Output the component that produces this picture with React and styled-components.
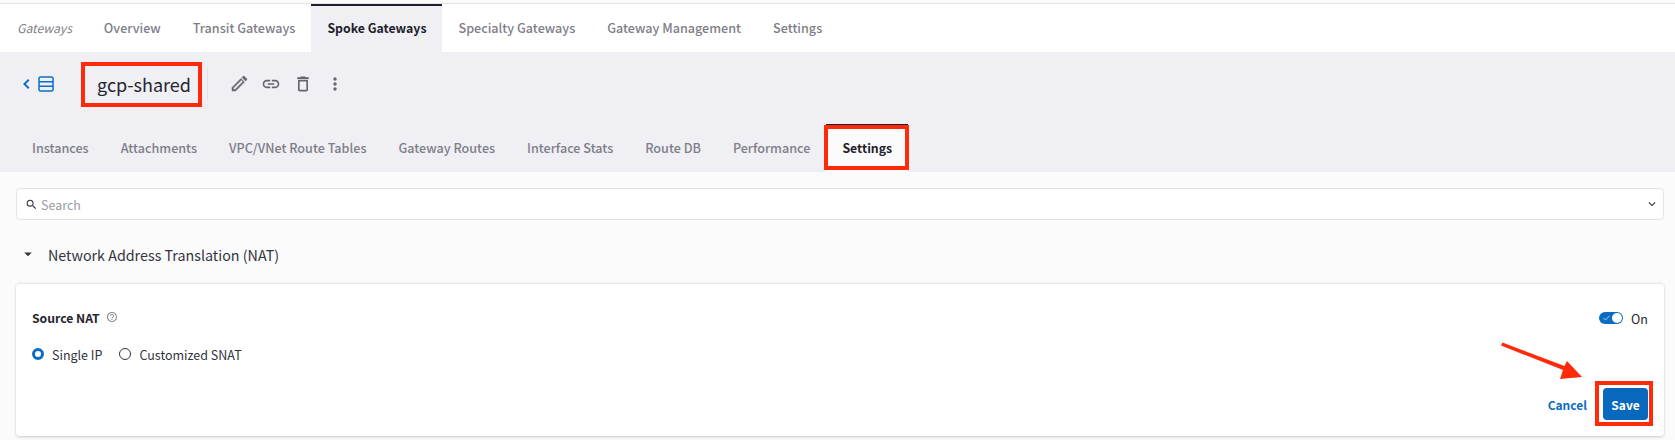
import React from "react";
import styled, { createGlobalStyle } from "styled-components";
import { MdLink, MdMoreVert, MdSearch, MdKeyboardArrowDown, MdArrowDropDown, MdHelpOutline, MdOutlineDelete } from "react-icons/md";

const Global = createGlobalStyle`
  html, body { margin: 0; padding: 0; background: #fbfbfc; }
  body { font-family: "Noto Sans CJK SC", "Noto Sans", sans-serif; }
`;

const Page = styled.div`
  position: relative;
  width: 1675px;
  height: 440px;
  overflow: hidden;
  background: #fbfbfc;
  color: #25252f;
`;

const TopNav = styled.nav`
  display: flex;
  align-items: stretch;
  height: 48px;
  margin-top: 3px;
  padding-left: 1px;
  background: #fff;
  border-top: 1px solid #e3e3e6;
`;

const Tab = styled.div`
  display: flex;
  align-items: center;
  padding: 0 16px 2px;
  font-size: ${(p) => (p.$italic ? "12.2px" : p.$active ? "12.3px" : "12.6px")};
  line-height: 20px;
  white-space: nowrap;
  box-sizing: border-box;
  color: ${(p) => (p.$active ? "#1f1f2b" : "#7e7e88")};
  font-style: ${(p) => (p.$italic ? "italic" : "normal")};
  font-weight: ${(p) => (p.$italic ? 400 : p.$active ? 700 : 500)};
  background: ${(p) => (p.$active ? p.$bg : "transparent")};
  border-top: 2px solid ${(p) => (p.$active ? "#1f1f2b" : "transparent")};
`;

const SubHeader = styled.header`
  height: 120px;
  background: #efeff4;
  display: flex;
  flex-direction: column;
`;

const TitleRow = styled.div`
  display: flex;
  align-items: center;
  height: 72px;
  padding: 0 0 8px 23px;
  box-sizing: border-box;
`;

const BackLink = styled.div`
  display: flex;
  align-items: center;
  gap: 8px;
  width: 74px;
  color: #0b6fc7;
`;

const Title = styled.h1`
  margin: -1px 0 0;
  width: 110px;
  font-size: 18px;
  font-weight: 400;
  line-height: 30px;
  white-space: nowrap;
  color: #25252f;
`;

const Divider = styled.div`
  width: 1px;
  height: 32px;
  background: #e0e0e5;
  margin-right: 21px;
`;

const IconGroup = styled.div`
  display: flex;
  align-items: center;
  gap: 12px;
  color: #66666f;
`;

const IconSlot = styled.span`
  display: flex;
  align-items: center;
  justify-content: center;
  width: 20px;
  height: 20px;
`;

const SubTabs = styled.div`
  display: flex;
  align-items: stretch;
  height: 48px;
  padding-left: 16px;
`;

const Content = styled.main`
  padding: 16px 11px 0 16px;
`;

const SearchBar = styled.div`
  display: flex;
  align-items: center;
  height: 32px;
  box-sizing: border-box;
  padding: 0 4px 0 8px;
  background: #fff;
  border: 1px solid #e3e3e6;
  border-radius: 4px;
  color: #33333d;
`;

const SearchText = styled.span`
  flex: 1;
  margin-left: 3px;
  font-size: 12.5px;
  color: #9a9aa2;
`;

const SectionHead = styled.div`
  display: flex;
  align-items: center;
  height: 63px;
  box-sizing: border-box;
  padding: 5px 0 0 3px;
  font-size: 14.3px;
  color: #33333d;
`;

const SectionTitle = styled.span`
  margin-left: 11px;
`;

const Card = styled.section`
  height: 153px;
  box-sizing: border-box;
  padding: 24px 16px 0 16px;
  background: #fff;
  border-radius: 4px;
  border-top: 1px solid #e8e8ea;
  box-shadow: 0 1px 3px rgba(30, 30, 50, 0.22);
  display: flex;
  flex-direction: column;
`;

const CardTop = styled.div`
  display: flex;
  align-items: center;
  justify-content: space-between;
  height: 20px;
`;

const FieldLabel = styled.div`
  display: flex;
  align-items: center;
  gap: 6px;
  font-size: 12.2px;
  font-weight: 700;
  color: #25252f;
`;

const HelpIcon = styled.span`
  display: flex;
  color: #8a8a93;
  margin-top: -2px;
`;

const ToggleWrap = styled.div`
  display: flex;
  align-items: center;
  gap: 8px;
  font-size: 12.5px;
  color: #25252f;
`;

const Toggle = styled.div`
  position: relative;
  width: 24px;
  height: 12px;
  border-radius: 6px;
  background: #0b6cc4;
  &::after {
    content: "";
    position: absolute;
    right: 1px;
    top: 1px;
    width: 10px;
    height: 10px;
    border-radius: 50%;
    background: #fff;
  }
`;

const ToggleCheck = styled.svg`
  position: absolute;
  left: 4px;
  top: 3px;
`;

const RadioRow = styled.div`
  display: flex;
  align-items: center;
  height: 20px;
  margin-top: 16px;
  font-size: 12.5px;
  color: #33333d;
`;

const Radio = styled.span`
  width: 12px;
  height: 12px;
  box-sizing: border-box;
  border-radius: 50%;
  margin-right: 8px;
  background: #fff;
  border: ${(p) => (p.$checked ? "3.5px solid #0b6cc4" : "1px solid #33333d")};
`;

const RadioLabel = styled.span`
  margin-right: 17px;
`;

const Actions = styled.div`
  display: flex;
  align-items: center;
  justify-content: flex-end;
  gap: 16px;
  margin-top: auto;
  margin-bottom: 16px;
`;

const CancelLink = styled.span`
  font-size: 12px;
  font-weight: 700;
  color: #0b6cc4;
`;

const SaveButton = styled.button`
  width: 45px;
  height: 32px;
  padding: 0;
  border: none;
  border-radius: 4px;
  background: #0868bd;
  color: #fff;
  font: 700 12px "Noto Sans CJK SC", "Noto Sans", sans-serif;
`;

const Highlight = styled.div`
  position: absolute;
  left: ${(p) => p.$x}px;
  top: ${(p) => p.$y}px;
  width: ${(p) => p.$w}px;
  height: ${(p) => p.$h}px;
  box-sizing: border-box;
  border: 4px solid #ff2a0a;
`;

const ArrowSvg = styled.svg`
  position: absolute;
  left: 1495px;
  top: 335px;
`;

const Pencil = () => (
  <svg width="18" height="18" viewBox="0 0 18 18" fill="currentColor" stroke="currentColor" strokeWidth="0.5" fillRule="evenodd">
    <path d="M2 16v-3.6L10.9 3.5l3.6 3.6L5.6 16H2zm1.4-1.4h1.6l8-8-1.6-1.6-8 8v1.6z" />
    <path d="M12 2.4l1-1c.4-.4 1-.4 1.4 0l2.2 2.2c.4.4.4 1 0 1.4l-1 1L12 2.4z" />
  </svg>
);

const Chevron = () => (
  <svg width="7" height="10" viewBox="0 0 7 10" fill="none" stroke="currentColor" strokeWidth="1.9">
    <path d="M5.8 0.7L1.4 5l4.4 4.3" />
  </svg>
);

const TableIcon = () => (
  <svg width="16" height="16" viewBox="0 0 16 16" fill="none" stroke="currentColor" strokeWidth="1.5">
    <rect x="1" y="1" width="14" height="14" rx="1.6" />
    <path d="M1 5.7h14M1 10.3h14" />
  </svg>
);

const mainTabs = ["Overview", "Transit Gateways", "Spoke Gateways", "Specialty Gateways", "Gateway Management", "Settings"];
const subTabs = ["Instances", "Attachments", "VPC/VNet Route Tables", "Gateway Routes", "Interface Stats", "Route DB", "Performance", "Settings"];

export default function App() {
  return (
    <Page>
      <Global />
      <TopNav>
        <Tab $italic>Gateways</Tab>
        {mainTabs.map((t) => (
          <Tab key={t} $active={t === "Spoke Gateways"} $bg="#efeff4">{t}</Tab>
        ))}
      </TopNav>
      <SubHeader>
        <TitleRow>
          <BackLink>
            <Chevron />
            <TableIcon />
          </BackLink>
          <Title>gcp-shared</Title>
          <Divider />
          <IconGroup>
            <IconSlot><Pencil /></IconSlot>
            <IconSlot><MdLink size={20} /></IconSlot>
            <IconSlot><MdOutlineDelete size={20} /></IconSlot>
            <IconSlot><MdMoreVert size={20} /></IconSlot>
          </IconGroup>
        </TitleRow>
        <SubTabs>
          {subTabs.map((t) => (
            <Tab key={t} $active={t === "Settings"} $bg="#fbfbfc">{t}</Tab>
          ))}
        </SubTabs>
      </SubHeader>
      <Content>
        <SearchBar>
          <MdSearch size={13} />
          <SearchText>Search</SearchText>
          <MdKeyboardArrowDown size={14} />
        </SearchBar>
        <SectionHead>
          <MdArrowDropDown size={18} />
          <SectionTitle>Network Address Translation (NAT)</SectionTitle>
        </SectionHead>
        <Card>
          <CardTop>
            <FieldLabel>
              Source NAT
              <HelpIcon><MdHelpOutline size={12} /></HelpIcon>
            </FieldLabel>
            <ToggleWrap>
              <Toggle>
                <ToggleCheck width="7" height="6" viewBox="0 0 7 6" fill="none" stroke="#cfe3f5" strokeWidth="0.8">
                  <path d="M0.5 3l2 2L6.5 0.8" />
                </ToggleCheck>
              </Toggle>
              On
            </ToggleWrap>
          </CardTop>
          <RadioRow>
            <Radio $checked />
            <RadioLabel>Single IP</RadioLabel>
            <Radio />
            <RadioLabel>Customized SNAT</RadioLabel>
          </RadioRow>
          <Actions>
            <CancelLink>Cancel</CancelLink>
            <SaveButton>Save</SaveButton>
          </Actions>
        </Card>
      </Content>
      <Highlight $x={81} $y={62} $w={121} $h={45} />
      <Highlight $x={824} $y={125} $w={85} $h={45} />
      <Highlight $x={1595} $y={381} $w={58} $h={45} />
      <ArrowSvg width="95" height="55" viewBox="0 0 95 55" fill="#ff2a0a">
        <path d="M7.5 7.5L69.5 31l2.5-5 15 16-22 2 3-9L6 10.5z" />
      </ArrowSvg>
    </Page>
  );
}
